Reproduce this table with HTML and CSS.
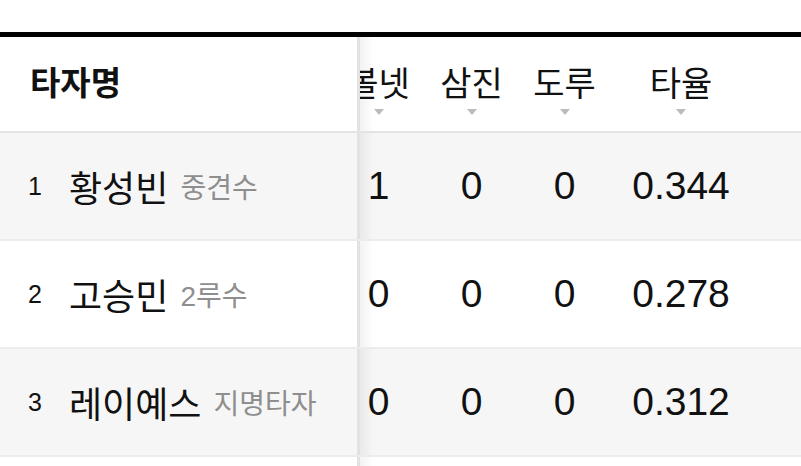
FILE: index.html
```html
<!DOCTYPE html>
<html lang="ko">
<head>
<meta charset="utf-8">
<link rel="stylesheet" href="styles.css">
</head>
<body>
<div class="table">
  <div class="row head">
    <div class="name-cell"><span class="head-title">타자명</span></div>
    <div class="stats">
      <div class="stats-inner">
        <div class="col"><span class="label">볼넷</span><span class="sort"></span></div>
        <div class="col"><span class="label">삼진</span><span class="sort"></span></div>
        <div class="col"><span class="label">도루</span><span class="sort"></span></div>
        <div class="col wide"><span class="label">타율</span><span class="sort"></span></div>
      </div>
    </div>
  </div>
  <div class="row alt">
    <div class="name-cell"><span class="rank">1</span><span class="player">황성빈</span><span class="pos">중견수</span></div>
    <div class="stats">
      <div class="stats-inner">
        <div class="col num">1</div>
        <div class="col num">0</div>
        <div class="col num">0</div>
        <div class="col num wide">0.344</div>
      </div>
    </div>
  </div>
  <div class="row">
    <div class="name-cell"><span class="rank">2</span><span class="player">고승민</span><span class="pos">2루수</span></div>
    <div class="stats">
      <div class="stats-inner">
        <div class="col num">0</div>
        <div class="col num">0</div>
        <div class="col num">0</div>
        <div class="col num wide">0.278</div>
      </div>
    </div>
  </div>
  <div class="row alt">
    <div class="name-cell"><span class="rank">3</span><span class="player">레이예스</span><span class="pos">지명타자</span></div>
    <div class="stats">
      <div class="stats-inner">
        <div class="col num">0</div>
        <div class="col num">0</div>
        <div class="col num">0</div>
        <div class="col num wide">0.312</div>
      </div>
    </div>
  </div>
  <div class="row tail">
    <div class="name-cell"></div>
    <div class="stats"></div>
  </div>
</div>
</body>
</html>
```

FILE: styles.css
```css
* { box-sizing: border-box; }

body {
  margin: 0;
  background: #fff;
  color: #111;
  font-family: "Liberation Sans", "Noto Sans CJK KR", sans-serif;
  overflow: hidden;
}

.table {
  margin-top: 32px;
  border-top: 5px solid #000;
}

.row {
  display: flex;
  height: 108px;
  border-bottom: 2px solid #ececec;
}

.row.alt { background: #f6f6f6; }

.row.head {
  height: 96px;
  border-bottom-color: #e4e4e4;
}

.row.tail { border-bottom: none; }

.name-cell {
  position: relative;
  z-index: 1;
  flex: none;
  width: 360px;
  border-right: 3px solid #e2e2e2;
  display: flex;
  align-items: center;
  padding-left: 28px;
}

.name-cell::after {
  content: "";
  position: absolute;
  top: 0;
  bottom: 0;
  left: 100%;
  width: 14px;
  margin-left: 3px;
  background: linear-gradient(to right, rgba(0,0,0,0.05), rgba(0,0,0,0));
}

.head .name-cell {
  align-items: flex-start;
  padding-top: 27px;
  padding-left: 30px;
}

.head-title {
  font-size: 33px;
  line-height: 40px;
  font-weight: 700;
  color: #111;
}

.stats {
  flex: 1;
  overflow: hidden;
  display: flex;
}

.stats-inner {
  display: flex;
  margin-left: -28px;
  flex: none;
}

.col {
  width: 93px;
  flex: none;
  display: flex;
  align-items: center;
  justify-content: center;
}

.col.wide { width: 140px; }

.head .col {
  flex-direction: column;
  justify-content: flex-start;
  padding-top: 27px;
}

.label {
  font-size: 34px;
  line-height: 40px;
  color: #111;
  white-space: nowrap;
}

.sort {
  margin-top: 5px;
  width: 0;
  height: 0;
  border-left: 5px solid transparent;
  border-right: 5px solid transparent;
  border-top: 6px solid #bcbcbc;
}

.num {
  font-size: 39px;
  color: #111;
}

.rank {
  width: 15px;
  font-size: 25px;
  color: #111;
}

.player {
  margin-left: 26px;
  font-size: 36px;
  color: #111;
}

.pos {
  margin-left: 12px;
  font-size: 28px;
  color: #8e8e8e;
}
```
